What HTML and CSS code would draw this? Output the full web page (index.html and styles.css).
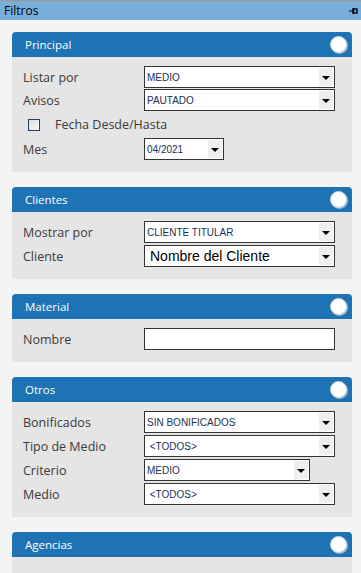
FILE: index.html
```html
<!DOCTYPE html>
<html lang="es">
<head>
    <meta charset="UTF-8">
    <meta name="viewport" content="width=device-width, initial-scale=1.0">
    <title>Filtros</title>
    <link rel="stylesheet" href="styles.css">
</head>
<body>

    <div class="titlebar">
        <span>Filtros</span>
        <svg class="pin" width="9" height="8" viewBox="0 0 9 8">
            <path d="M0 4H4M4 1V7" stroke="#000" stroke-width="1.2" fill="none"/>
            <rect x="4.5" y="2" width="3.5" height="4" stroke="#000" stroke-width="1.4" fill="none"/>
        </svg>
    </div>

    <div class="content">

        <div class="panel">
            <div class="panel-head">
                <span>Principal</span>
                <span class="toggle"></span>
            </div>
            <div class="panel-body tight">
                <div class="row">
                    <label>Listar por</label>
                    <div class="select"><span class="value">MEDIO</span><span class="arrow"></span></div>
                </div>
                <div class="row">
                    <label>Avisos</label>
                    <div class="select"><span class="value">PAUTADO</span><span class="arrow"></span></div>
                </div>
                <div class="row check-row">
                    <span class="checkbox"></span>
                    <label>Fecha Desde/Hasta</label>
                </div>
                <div class="row">
                    <label>Mes</label>
                    <div class="select short"><span class="value">04/2021</span><span class="arrow"></span></div>
                </div>
            </div>
        </div>

        <div class="panel">
            <div class="panel-head">
                <span>Clientes</span>
                <span class="toggle"></span>
            </div>
            <div class="panel-body">
                <div class="row">
                    <label>Mostrar por</label>
                    <div class="select"><span class="value">CLIENTE TITULAR</span><span class="arrow"></span></div>
                </div>
                <div class="row">
                    <label>Cliente</label>
                    <div class="select big"><span class="value">Nombre del Cliente</span><span class="arrow"></span></div>
                </div>
            </div>
        </div>

        <div class="panel">
            <div class="panel-head">
                <span>Material</span>
                <span class="toggle"></span>
            </div>
            <div class="panel-body">
                <div class="row">
                    <label>Nombre</label>
                    <input type="text" class="text-input">
                </div>
            </div>
        </div>

        <div class="panel">
            <div class="panel-head">
                <span>Otros</span>
                <span class="toggle"></span>
            </div>
            <div class="panel-body">
                <div class="row">
                    <label>Bonificados</label>
                    <div class="select"><span class="value">SIN BONIFICADOS</span><span class="arrow"></span></div>
                </div>
                <div class="row">
                    <label>Tipo de Medio</label>
                    <div class="select"><span class="value">&nbsp;&lt;TODOS&gt;</span><span class="arrow"></span></div>
                </div>
                <div class="row">
                    <label>Criterio</label>
                    <div class="select mid"><span class="value">MEDIO</span><span class="arrow"></span></div>
                </div>
                <div class="row">
                    <label>Medio</label>
                    <div class="select"><span class="value">&nbsp;&lt;TODOS&gt;</span><span class="arrow"></span></div>
                </div>
            </div>
        </div>

        <div class="panel last">
            <div class="panel-head">
                <span>Agencias</span>
                <span class="toggle"></span>
            </div>
            <div class="panel-body empty"></div>
        </div>

    </div>

</body>
</html>
```

FILE: styles.css
```css
body {
    margin: 0;
    background-color: #f4f4f4;
    font-family: "Open Sans", "Noto Sans", sans-serif;
    overflow: hidden;
}
.titlebar {
    height: 19px;
    border-top: 1px solid #9a9a9a;
    background-color: #79aedb;
    display: flex;
    align-items: center;
    justify-content: space-between;
    padding: 0 3px 0 4px;
    font-size: 12px;
    color: #000;
}
.pin {
    display: block;
}
.content {
    padding: 12px 9px 0 12px;
}
.panel {
    margin-bottom: 15px;
}
.panel.last {
    margin-bottom: 0;
}
.panel-head {
    height: 25px;
    background-color: #1e73b5;
    border-radius: 4px 4px 0 0;
    display: flex;
    align-items: center;
    justify-content: space-between;
    padding: 0 5px 0 13px;
    color: #fff;
    font-size: 11.5px;
}
.toggle {
    width: 15px;
    height: 15px;
    border-radius: 50%;
    background: #fff;
    border: 1px solid #c8d4e0;
    box-shadow: 1px 1px 0 #9fb8cf;
}
.panel-body {
    background-color: #e5e5e5;
    padding: 9px 17px 10px 11px;
}
.panel-body.tight {
    padding-bottom: 11px;
}
.panel-body.empty {
    height: 16px;
    padding: 0;
}
.row {
    display: flex;
    align-items: center;
    height: 22px;
    margin-bottom: 2px;
}
.tight .row {
    margin-bottom: 1px;
}
.row label {
    width: 121px;
    flex-shrink: 0;
    font-size: 12.5px;
    color: #3a3a3a;
}
.tight .check-row {
    height: 25px;
}
.check-row label {
    width: auto;
}
.checkbox {
    width: 10px;
    height: 10px;
    margin: 0 15px 0 5px;
    border: 1px solid #1f3f66;
    background: linear-gradient(135deg, #dcdcdc, #fafafa);
}
.select {
    width: 191px;
    height: 22px;
    box-sizing: border-box;
    border: 1px solid #333;
    background: #fff;
    display: flex;
    align-items: stretch;
    font-family: "Liberation Sans", Arial, sans-serif;
    font-size: 10px;
    color: #1c2f57;
}
.select.short {
    width: 80px;
}
.select.mid {
    width: 166px;
}
.select.big {
    font-size: 14px;
    color: #000;
}
.value {
    flex: 1;
    display: flex;
    align-items: center;
    padding-left: 2px;
    white-space: nowrap;
    overflow: hidden;
}
.big .value {
    padding-left: 5px;
}
.arrow {
    width: 14px;
    margin: 1px 1px 1px 0;
    background: #efefef;
    position: relative;
}
.arrow::after {
    content: "";
    position: absolute;
    left: 3px;
    top: 8px;
    border-left: 4px solid transparent;
    border-right: 4px solid transparent;
    border-top: 4px solid #000;
}
.text-input {
    width: 191px;
    height: 22px;
    box-sizing: border-box;
    border: 1px solid #333;
    margin: 0;
    padding: 0 3px;
    background: #fff;
}
```
